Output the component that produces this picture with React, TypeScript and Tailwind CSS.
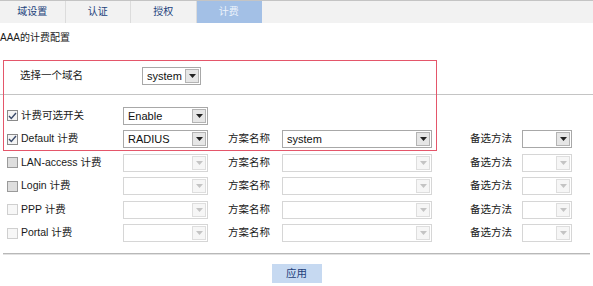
import React from 'react'

const font = "font-['Liberation_Sans','Noto_Sans_CJK_SC',sans-serif]"

function Arrow({ disabled }: { disabled?: boolean }) {
  return (
    <div
      className={`flex w-[14px] m-[1px] items-center justify-center border ${
        disabled ? 'border-[#dedede] bg-[#f6f6f6]' : 'border-[#b4b4b4] bg-[#e6e6e6]'
      }`}
    >
      <svg width="7" height="4" viewBox="0 0 7 4">
        <path d="M0 0h7L3.5 4z" fill={disabled ? '#c4c4c4' : '#222'} />
      </svg>
    </div>
  )
}

function Sel({ w, value, disabled }: { w: string; value?: string; disabled?: boolean }) {
  return (
    <div
      className={`flex h-[18px] border bg-white ${w} ${
        disabled ? 'border-[#d6d6d6]' : 'border-[#a8a8a8]'
      }`}
    >
      <div className="flex-1 pl-[4px] text-[11px] leading-[16px] text-[#111]">{value}</div>
      <Arrow disabled={disabled} />
    </div>
  )
}

function Check({ state }: { state: 'on' | 'off' | 'dim' }) {
  if (state === 'on')
    return (
      <div className="flex h-[11px] w-[11px] items-center justify-center border border-[#8a8a8a] bg-[#f4f4f4]">
        <svg width="9" height="8" viewBox="0 0 9 8">
          <path d="M1 4l2.3 2.5L8 1" fill="none" stroke="#3a4a6a" strokeWidth="1.4" />
        </svg>
      </div>
    )
  return (
    <div
      className={`h-[11px] w-[11px] border ${
        state === 'off' ? 'border-[#9a9a9a] bg-[#dedede]' : 'border-[#cfcfcf] bg-[#f7f7f7]'
      }`}
    />
  )
}

export default function App() {
  const tabs = ['域设置', '认证', '授权', '计费']
  const rows: { label: string; check: 'on' | 'off' | 'dim'; value?: string; full: boolean; scheme?: string }[] = [
    { label: '计费可选开关', check: 'on', value: 'Enable', full: false },
    { label: 'Default 计费', check: 'on', value: 'RADIUS', full: true, scheme: 'system' },
    { label: 'LAN-access 计费', check: 'off', full: true },
    { label: 'Login 计费', check: 'off', full: true },
    { label: 'PPP 计费', check: 'dim', full: true },
    { label: 'Portal 计费', check: 'dim', full: true },
  ]

  return (
    <div className={`relative h-[286px] w-[593px] overflow-hidden bg-white text-[#1a1a1a] ${font}`}>
      <div className="flex h-[23px] border-t border-[#c4c4c4] bg-[#f2f2f2]">
        {tabs.map((t, i) => (
          <div
            key={t}
            className={`w-[65.5px] border-r text-center text-[10px] leading-[22px] ${
              i === 3
                ? 'border-[#a3c0e6] bg-[#a3c0e6] text-[#eef4fc]'
                : 'border-[#dcdcdc] text-[#24427c]'
            }`}
          >
            {t}
          </div>
        ))}
      </div>

      <div className="mt-[8px] text-[10px] leading-[14px]">AAA的计费配置</div>

      <div className="mt-[21px] flex h-[19px] items-center pl-[20px]">
        <div className="w-[122px] text-[10.5px]">选择一个域名</div>
        <Sel w="w-[59px]" value="system" />
      </div>

      <div className="mt-[9px] border-t border-[#c4c4c4]" />

      <div className="mt-[9px]">
        {rows.map((r) => (
          <div key={r.label} className="flex h-[23.5px] items-center pl-[7px]">
            <Check state={r.check} />
            <div className="w-[105px] pl-[3px] text-[10.5px]">{r.label}</div>
            <Sel w="w-[85px]" value={r.value} disabled={!r.value} />
            {r.full && (
              <>
                <div className="ml-[20px] w-[54px] text-[10.5px]">方案名称</div>
                <Sel w="w-[150px]" value={r.scheme} disabled={!r.scheme} />
                <div className="ml-[38px] w-[52px] text-[10.5px]">备选方法</div>
                <Sel w="w-[50px]" disabled={!r.scheme} />
              </>
            )}
          </div>
        ))}
      </div>

      <div className="mx-[3px] mt-[8px] border-t border-[#b8b8b8] shadow-[0_1px_0_#e2e2e2]" />

      <div className="mt-[10px] flex justify-center">
        <div className="h-[19px] w-[50px] bg-[#c6d9f1] text-center text-[10.5px] leading-[19px] text-[#23407a]">
          应用
        </div>
      </div>

      <div className="pointer-events-none absolute left-[3px] top-[60px] h-[91px] w-[434px] border-[1.5px] border-[#e4566a]" />
    </div>
  )
}
